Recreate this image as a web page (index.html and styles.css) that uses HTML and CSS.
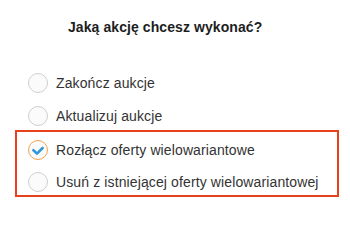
FILE: index.html
```html
<!DOCTYPE html>
<html lang="pl">
<head>
<meta charset="utf-8">
<title>Jaką akcję chcesz wykonać?</title>
<link rel="stylesheet" href="styles.css">
</head>
<body>
<div class="page">
  <h1 class="title">Jaką akcję chcesz wykonać?</h1>
  <div class="options">
    <label class="option option-plain"><span class="radio"></span><span class="label">Zakończ aukcje</span></label>
    <label class="option option-plain option-second"><span class="radio"></span><span class="label">Aktualizuj aukcje</span></label>
    <div class="highlight">
      <label class="option"><span class="radio radio-checked"><svg class="check" viewBox="0 0 18 18" width="18" height="18"><path d="M4.4 9.2 L8 12.6 L13.6 7" fill="none" stroke="#3197d8" stroke-width="2.6" stroke-linecap="round" stroke-linejoin="round"/></svg></span><span class="label">Rozłącz oferty wielowariantowe</span></label>
      <label class="option option-last"><span class="radio"></span><span class="label">Usuń z istniejącej oferty wielowariantowej</span></label>
    </div>
  </div>
</div>
</body>
</html>
```

FILE: styles.css
```css
html, body {
  margin: 0;
  padding: 0;
  background: #ffffff;
}

.page {
  width: 324px;
  padding: 17px 11px 0 15px;
  font-family: "Liberation Sans", Arial, sans-serif;
  color: #333333;
}

.title {
  margin: 0;
  padding-left: 53px;
  font-size: 14px;
  font-weight: bold;
  line-height: 20px;
  letter-spacing: 0.08px;
  color: #1e1e1e;
}

.options {
  margin-top: 36px;
  display: flex;
  flex-direction: column;
}

.option {
  display: flex;
  align-items: center;
  gap: 8px;
  height: 20px;
  font-size: 14px;
  line-height: 20px;
  color: #333333;
}

.option-plain {
  padding-left: 13px;
}

.option-second {
  margin-top: 13px;
}

.highlight {
  margin-top: 4px;
  border: 2px solid #e8421d;
  padding: 8px 0 3px 11px;
  display: flex;
  flex-direction: column;
  gap: 12px;
}

.radio {
  box-sizing: border-box;
  width: 20px;
  height: 20px;
  flex: 0 0 20px;
  border: 1px solid #cfcfcf;
  border-radius: 50%;
  background: #fbfbfb;
  display: flex;
  align-items: center;
  justify-content: center;
}

.radio-checked {
  border-color: #f3a24f;
}

.check {
  display: block;
}

.label {
  white-space: nowrap;
  letter-spacing: 0.12px;
}
```
